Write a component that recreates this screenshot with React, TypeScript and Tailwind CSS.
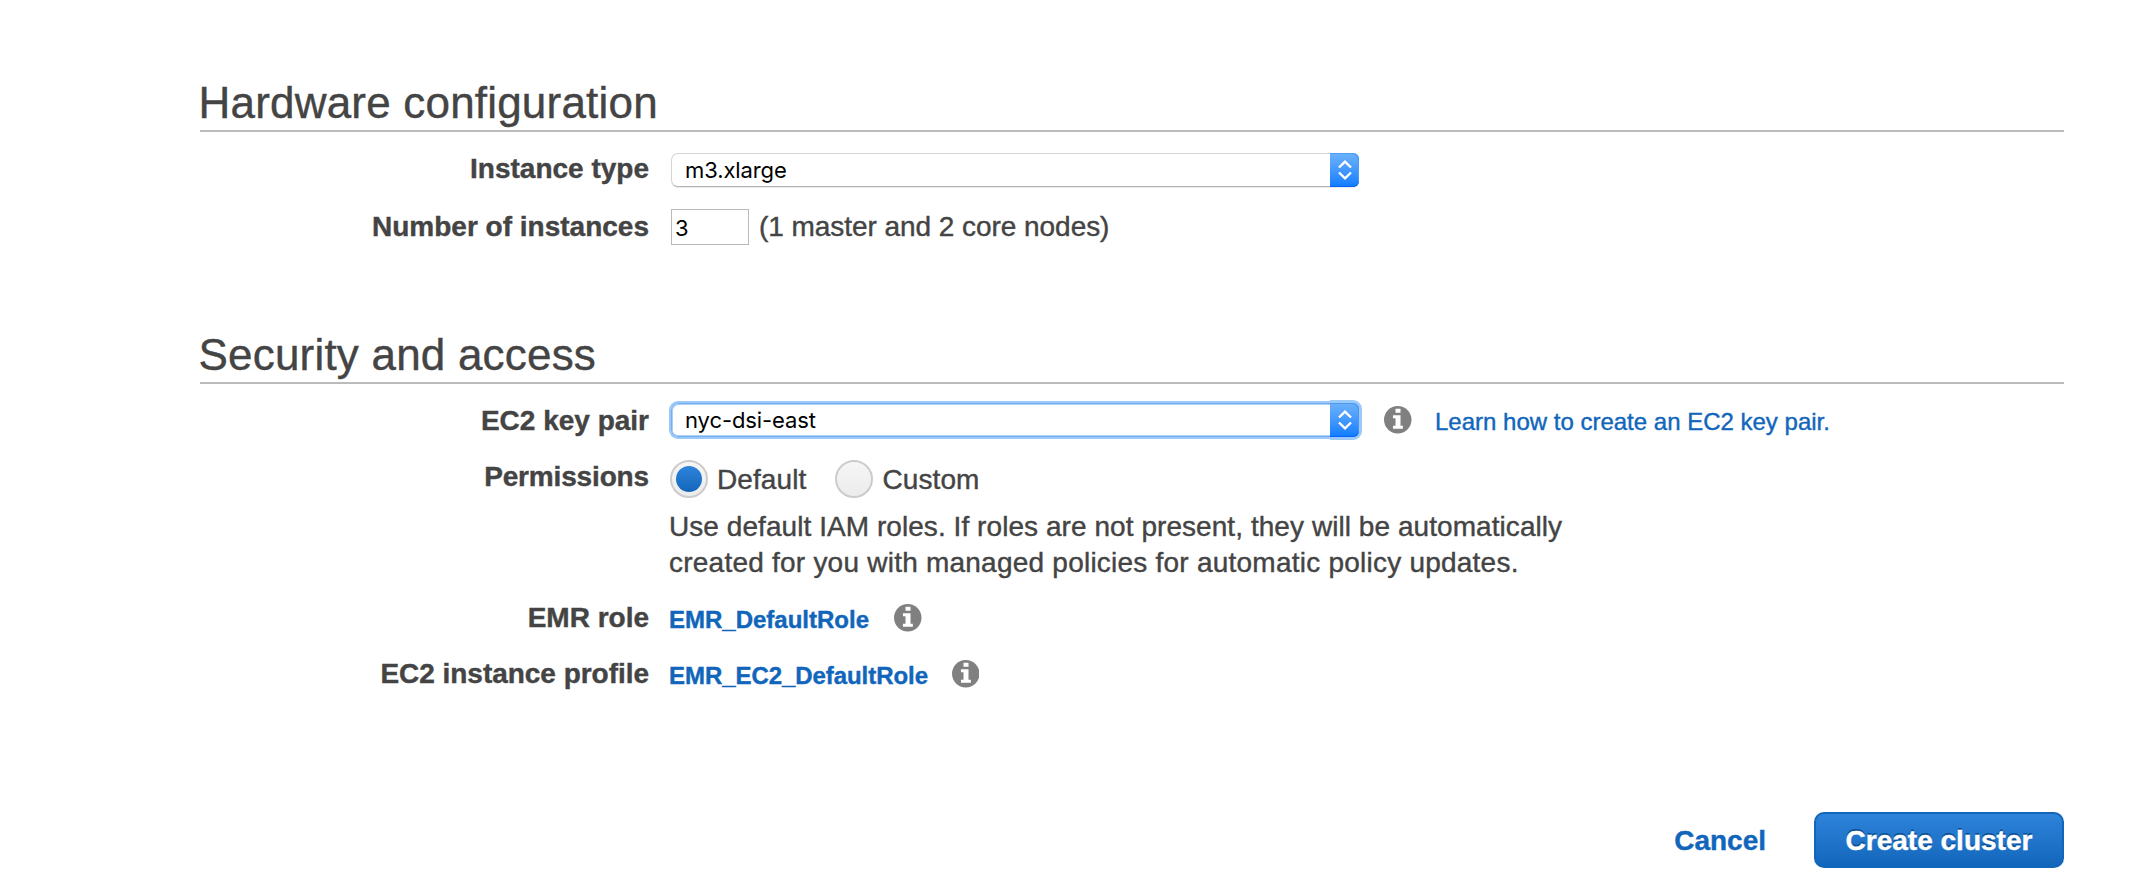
import type { ReactNode } from "react";

function InfoIcon({ className = "" }: { className?: string }) {
  return (
    <svg viewBox="0 0 27 27" className={`size-[27.5px] shrink-0 ${className}`} aria-hidden="true">
      <circle cx="13.5" cy="13.5" r="13.5" fill="#808080" />
      <path d="M11.3 2.7h4.9v4h-4.9zM8.8 9h7.4v10.3h2.3v3h-9.7v-3h2.5v-7.2h-2.5z" fill="#fff" />
    </svg>
  );
}

function Chevrons({ focused }: { focused: boolean }) {
  return (
    <span
      className={`flex h-[34px] w-[29px] shrink-0 items-center justify-center rounded-r-[6px] bg-linear-to-b from-[#6cb2fb] to-[#067cff] ${
        focused
          ? "shadow-[0_0_0_3px_#9bcafa,inset_0_-1px_0_#0a62f5,inset_-1px_1px_0_#4d97ee] [clip-path:inset(-3px_-3px_-3px_0)]"
          : "shadow-[inset_0_-1px_0_#0a62f5,inset_-1px_1px_0_#4d9cf8]"
      }`}
    >
      <svg viewBox="0 0 14 20" className="h-5 w-3.5" fill="none" stroke="#fff" strokeWidth="2.4">
        <path d="M1 7.5 7 1.7l6 5.8M1 12.5l6 5.8 6-5.8" />
      </svg>
    </span>
  );
}

function Select({ value, focused = false }: { value: string; focused?: boolean }) {
  return (
    <div
      className={`flex h-[34px] w-[688px] shrink-0 rounded-[7px] ${
        focused ? "shadow-[0_0_0_2px_#9bcafa]" : "shadow-[0_1px_1px_#00000018]"
      }`}
    >
      <div
        className={`flex flex-1 items-center rounded-l-[7px] border border-r-0 bg-white pl-[13px] font-[Inter,sans-serif] text-[22px] leading-8 tracking-[-0.1px] text-black ${
          focused
            ? "border-[#78aeeb] shadow-[inset_1px_1px_0_#a9d0fa,inset_0_-1px_0_#a9d0fa]"
            : "border-[#d4d4d4] border-b-[#b4b4b4]"
        }`}
      >
        {value}
      </div>
      <Chevrons focused={focused} />
    </div>
  );
}

function Row({
  label,
  className = "",
  labelClass = "",
  children,
}: {
  label: string;
  className?: string;
  labelClass?: string;
  children: ReactNode;
}) {
  return (
    <div className={`flex items-start ${className}`}>
      <div className={`mr-[21px] w-[449px] shrink-0 text-right font-bold ${labelClass}`}>{label}</div>
      {children}
    </div>
  );
}

function Heading({ children }: { children: ReactNode }) {
  return (
    <h2 className="h-[55px] border-b-2 border-[#bbb] -indent-[1.5px] text-[44px] leading-[52px] tracking-[0.2px]">
      {children}
    </h2>
  );
}

function Radio({ label, checked = false }: { label: string; checked?: boolean }) {
  return (
    <label className="flex items-center">
      <span className="mr-[9px] flex size-[38px] items-center justify-center rounded-full border-2 border-[#ccc] bg-linear-to-b from-[#f6f6f6] to-[#ececec]">
        {checked && <span className="size-[26px] rounded-full bg-linear-to-b from-[#2e83da] to-[#1166bb]" />}
      </span>
      <span className="pt-[2px] tracking-[0.1px]">{label}</span>
    </label>
  );
}

export default function App() {
  return (
    <div className="h-[886px] w-[2148px] overflow-hidden bg-white pt-[77px] pr-[84px] pl-[200px] font-['Liberation_Sans',Arial,sans-serif] text-[28px] leading-9 text-[#444] [-webkit-text-stroke:0.4px]">
      <section className="h-[252px]">
        <Heading>Hardware configuration</Heading>
        <Row label="Instance type" className="mt-[19px] h-[58px]">
          <div className="mt-[2px] ml-px [-webkit-text-stroke:0]">
            <Select value="m3.xlarge" />
          </div>
        </Row>
        <Row label="Number of instances">
          <div className="mr-[10px] ml-px h-9 w-[78px] border border-[#bbb] pl-[3px] font-[Inter,sans-serif] text-[22px] text-black [-webkit-text-stroke:0]">
            3
          </div>
          <span className="tracking-[-0.05px]">(1 master and 2 core nodes)</span>
        </Row>
      </section>
      <section className="h-[483px]">
        <Heading>Security and access</Heading>
        <Row label="EC2 key pair" className="mt-[19px] h-14">
          <div className="ml-px [-webkit-text-stroke:0]">
            <Select value="nyc-dsi-east" focused />
          </div>
          <InfoIcon className="mt-[3px] ml-[25px]" />
          <a className="mt-px ml-[23.5px] text-[24px] text-[#1166bb]">Learn how to create an EC2 key pair.</a>
        </Row>
        <Row label="Permissions" className="h-[141px]" labelClass="tracking-[-0.15px]">
          <div>
            <div className="mt-px flex h-[49px] items-start gap-[29px]">
              <Radio label="Default" checked />
              <Radio label="Custom" />
            </div>
            <p className="-ml-px whitespace-nowrap">
              <span className="tracking-[0.06px]">
                Use default IAM roles. If roles are not present, they will be automatically
              </span>
              <br />
              <span className="tracking-[0.23px]">
                created for you with managed policies for automatic policy updates.
              </span>
            </p>
          </div>
        </Row>
        <Row label="EMR role" className="h-14">
          <a className="mt-[2px] -ml-px text-[24px] font-bold text-[#1166bb]">EMR_DefaultRole</a>
          <InfoIcon className="mt-[4px] ml-[25px]" />
        </Row>
        <Row label="EC2 instance profile" labelClass="tracking-[-0.03px]">
          <a className="mt-[2px] -ml-px text-[24px] font-bold tracking-[-0.06px] text-[#1166bb]">EMR_EC2_DefaultRole</a>
          <InfoIcon className="mt-[4px] ml-[24px]" />
        </Row>
      </section>
      <div className="flex items-center justify-end gap-12 font-bold">
        <button className="pt-px text-[#1166bb]">Cancel</button>
        <button className="h-14 w-[250px] rounded-[10px] border-2 border-[#1166bb] bg-linear-to-b from-[#2e83da] to-[#1166bb] pt-px text-white [text-shadow:0_-2px_0_#0d4f92]">
          Create cluster
        </button>
      </div>
    </div>
  );
}
